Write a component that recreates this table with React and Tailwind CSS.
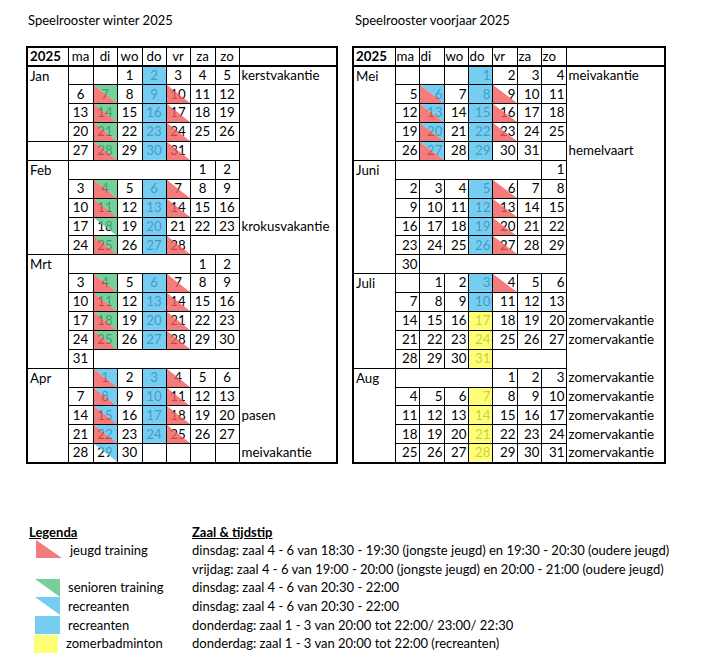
const RED = '#f15b5b';
const GREEN = '#52c482';
const BLUE = '#54c0ef';
const YELLOW = '#ffff55';

const BL = '0,0 0,1 1,1';
const TR = '0,0 1,0 1,1';
const FULL = '0,0 1,0 1,1 0,1';

const FILLS = {
  r: [[BL, RED]],
  g: [[TR, GREEN]],
  t: [[TR, BLUE]],
  b: [[FULL, BLUE]],
  y: [[FULL, YELLOW]],
  rg: [[BL, RED], [TR, GREEN]],
  rb: [[BL, RED], [TR, BLUE]],
};

const DAYS = ['ma', 'di', 'wo', 'do', 'vr', 'za', 'zo'];

const winter = [
  {
    name: 'Jan',
    labelSpan: 4,
    rows: [
      ['', '', 1, '2b', 3, 4, 5],
      [6, '7rg', 8, '9b', '10r', 11, 12],
      [13, '14rg', 15, '16b', '17r', 18, 19],
      [20, '21rg', 22, '23b', '24r', 25, 26],
      [27, '28rg', 29, '30b', '31r', { span: 2 }],
    ],
  },
  {
    name: 'Feb',
    rows: [
      [{ span: 5 }, 1, 2],
      [3, '4rg', 5, '6b', '7r', 8, 9],
      [10, '11rg', 12, '13b', '14r', 15, 16],
      [17, '18g', 19, '20b', 21, 22, 23],
      [24, '25rg', 26, '27b', '28r', { span: 2 }],
    ],
  },
  {
    name: 'Mrt',
    rows: [
      [{ span: 5 }, 1, 2],
      [3, '4rg', 5, '6b', '7r', 8, 9],
      [10, '11rg', 12, '13b', '14r', 15, 16],
      [17, '18rg', 19, '20b', '21r', 22, 23],
      [24, '25rg', 26, '27b', '28r', 29, 30],
      [31, { span: 6 }],
    ],
  },
  {
    name: 'Apr',
    rows: [
      ['', '1rb', 2, '3b', '4r', 5, 6],
      [7, '8rb', 9, '10b', '11r', 12, 13],
      [14, '15rb', 16, '17b', '18r', 19, 20],
      [21, '22rb', 23, '24b', '25r', 26, 27],
      [28, '29t', 30, '', '', '', ''],
    ],
  },
];

const spring = [
  {
    name: 'Mei',
    rows: [
      ['', '', '', '1b', 2, 3, 4],
      [5, '6rb', 7, '8b', '9r', 10, 11],
      [12, '13rb', 14, '15b', '16r', 17, 18],
      [19, '20rb', 21, '22b', '23r', 24, 25],
      [26, '27rb', 28, '29b', 30, 31, ''],
    ],
  },
  {
    name: 'Juni',
    rows: [
      [{ span: 6 }, 1],
      [2, 3, 4, '5b', '6r', 7, 8],
      [9, 10, 11, '12b', '13r', 14, 15],
      [16, 17, 18, '19b', '20r', 21, 22],
      [23, 24, 25, '26b', '27r', 28, 29],
      [30, { span: 6 }],
    ],
  },
  {
    name: 'Juli',
    rows: [
      ['', 1, 2, '3b', '4r', 5, 6],
      [7, 8, 9, '10b', 11, 12, 13],
      [14, 15, 16, '17y', 18, 19, 20],
      [21, 22, 23, '24y', 25, 26, 27],
      [28, 29, 30, '31y', { span: 3 }],
    ],
  },
  {
    name: 'Aug',
    rows: [
      [{ span: 4 }, 1, 2, 3],
      [4, 5, 6, '7y', 8, 9, 10],
      [11, 12, 13, '14y', 15, 16, 17],
      [18, 19, 20, '21y', 22, 23, 24],
      [25, 26, 27, '28y', 29, 30, 31],
    ],
  },
];

const winterNotes = { 0: 'kerstvakantie', 8: 'krokusvakantie', 18: 'pasen', 20: 'meivakantie' };
const springNotes = {
  0: 'meivakantie',
  4: 'hemelvaart',
  13: 'zomervakantie',
  14: 'zomervakantie',
  16: 'zomervakantie',
  17: 'zomervakantie',
  18: 'zomervakantie',
  19: 'zomervakantie',
  20: 'zomervakantie',
};

function Shape({ fill }) {
  const parts = FILLS[fill];
  if (!parts) return null;
  return (
    <svg className="absolute inset-0 w-full h-full pointer-events-none" viewBox="0 0 1 1" preserveAspectRatio="none">
      {parts.map(([pts, color], i) => (
        <polygon key={i} points={pts} fill={color} fillOpacity="0.8" />
      ))}
    </svg>
  );
}

function parse(v) {
  if (typeof v === 'number') return { d: v };
  if (v === '') return { d: '' };
  const m = v.match(/^(\d+)([a-z]+)$/);
  return { d: m[1], f: m[2] };
}

function Schedule({ title, months, notes, widths, numAlign, headAlign, titleClass }) {
  let rowIdx = 0;
  const cell = 'border border-black h-[18.9px] p-0 leading-none';

  return (
    <div>
      <div className={`h-[38px] pt-[3px] text-[13px] ${titleClass}`}>{title}</div>
      <table className="table-fixed border-collapse border-2 border-black" style={{ width: widths.reduce((a, b) => a + b, 0) }}>
        <colgroup>
          {widths.map((w, i) => (
            <col key={i} style={{ width: w }} />
          ))}
        </colgroup>
        <tbody>
          <tr>
            <td className={`${cell} border-b-2 font-bold text-left pl-[2px]`}>2025</td>
            {DAYS.map((d) => (
              <td key={d} className={`${cell} border-b-2 ${headAlign}`}>{d}</td>
            ))}
            <td className={`${cell} border-b-2 border-l`}></td>
          </tr>
          {months.map((m) =>
            m.rows.map((r, ri) => {
              const idx = rowIdx++;
              const span = m.labelSpan || m.rows.length;
              let label = null;
              if (ri === 0) {
                label = (
                  <td rowSpan={span} className={`${cell} align-top text-left pl-[2px] pt-[3px]`}>
                    {m.name}
                  </td>
                );
              } else if (ri >= span) {
                label = <td className={cell}></td>;
              }
              return (
                <tr key={idx}>
                  {label}
                  {r.map((v, ci) => {
                    if (typeof v === 'object') return <td key={ci} colSpan={v.span} className={cell}></td>;
                    const c = parse(v);
                    return (
                      <td key={ci} className={`${cell} relative ${numAlign}`}>
                        {c.d}
                        <Shape fill={c.f} />
                      </td>
                    );
                  })}
                  <td className="p-0 pl-[2px] text-left whitespace-nowrap leading-none">{notes[idx] || ''}</td>
                </tr>
              );
            })
          )}
        </tbody>
      </table>
    </div>
  );
}

function Tri({ points, color, className = '' }) {
  return (
    <svg className={`h-[18px] shrink-0 ${className}`} viewBox="0 0 1 1" preserveAspectRatio="none">
      <polygon points={points} fill={color} fillOpacity="0.8" />
    </svg>
  );
}

const legend = [
  { icon: <Tri points={BL} color={RED} className="ml-[10px] w-[26px] mt-[-3px]" />, label: 'jeugd training', text: 'dinsdag: zaal 4 - 6 van 18:30 - 19:30 (jongste jeugd) en 19:30 - 20:30 (oudere jeugd)' },
  { icon: null, label: '', text: 'vrijdag: zaal 4 - 6 van 19:00 - 20:00 (jongste jeugd) en 20:00 - 21:00 (oudere jeugd)' },
  { icon: <Tri points={TR} color={GREEN} className="ml-[9px] w-[25px]" />, label: 'senioren training', text: 'dinsdag: zaal 4 - 6 van 20:30 - 22:00' },
  { icon: <Tri points={TR} color={BLUE} className="ml-[9px] w-[25px]" />, label: 'recreanten', text: 'dinsdag: zaal 4 - 6 van 20:30 - 22:00' },
  { icon: <Tri points={FULL} color={BLUE} className="ml-[9px] w-[25px]" />, label: 'recreanten', text: 'donderdag: zaal 1 - 3 van 20:00 tot 22:00/ 23:00/ 22:30' },
  { icon: <Tri points={FULL} color={YELLOW} className="ml-[8px] w-[24px] mt-[1px]" />, label: 'zomerbadminton', text: 'donderdag: zaal 1 - 3 van 20:00 tot 22:00 (recreanten)' },
];

export default function App() {
  return (
    <div className="w-[720px] h-[671px] bg-white text-black font-[Lato,'Open_Sans',sans-serif] pl-[26px] pt-[8px] overflow-hidden">
      <div className="flex gap-[14px] text-[13.3px]">
        <Schedule
          title="Speelrooster winter 2025"
          titleClass="pl-[2px]"
          months={winter}
          notes={winterNotes}
          widths={[41, 25, 24, 25, 24, 24, 25, 24, 98]}
          numAlign="text-center"
          headAlign="text-center"
        />
        <Schedule
          title="Speelrooster voorjaar 2025"
          titleClass="pl-[3px]"
          months={spring}
          notes={springNotes}
          widths={[42, 24, 25, 24, 24, 25, 24, 25, 99]}
          numAlign="text-right pr-[1px]"
          headAlign="text-left pl-[1px]"
        />
      </div>

      <div className="mt-[59px] text-[13px] leading-[18.6px]">
        <div className="grid grid-cols-[166px_1fr]">
          <div className="pl-[3px] font-bold underline">Legenda</div>
          <div className="font-bold underline">Zaal &amp; tijdstip</div>
        </div>
        {legend.map((l, i) => (
          <div key={i} className="grid grid-cols-[166px_1fr] h-[18.6px]">
            <div className="flex items-center gap-[8px]">
              {l.icon ? l.icon : <span className="w-[36px]" />}
              <span>{l.label}</span>
            </div>
            <div className="whitespace-nowrap">{l.text}</div>
          </div>
        ))}
      </div>
    </div>
  );
}
